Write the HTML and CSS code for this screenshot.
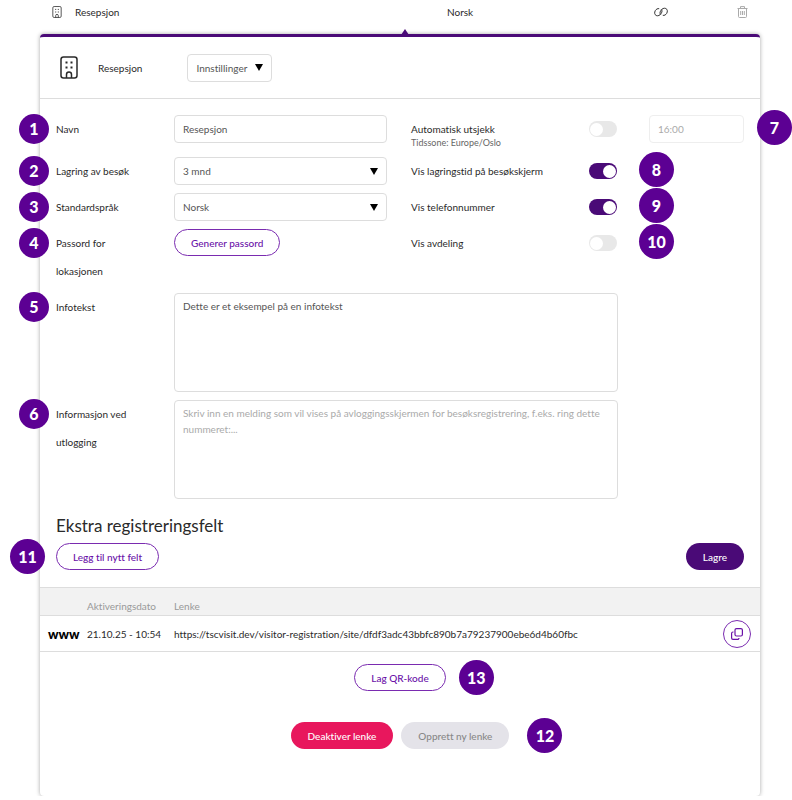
FILE: index.html
```
<!DOCTYPE html>
<html lang="no">

<head>
    <meta charset="UTF-8">
    <meta name="viewport" content="width=device-width, initial-scale=1.0">
    <title>Resepsjon</title>
    <link rel="stylesheet" href="styles.css">
</head>

<body>
    <svg class="sprite" width="0" height="0">
        <symbol id="building" viewBox="0 0 18 23">
            <rect x="1" y="1" width="16" height="21" rx="2.5" fill="none" stroke="currentColor" stroke-width="1.5"/>
            <path d="M6.500 22v-3.500a2.500 2.500 0 0 1 5 0V22" fill="none" stroke="currentColor" stroke-width="1.500"/>
            <path d="M5.500 6.500h2M10.500 6.500h2M5.500 11.500h2M10.500 11.500h2" stroke="currentColor" stroke-width="1.800"/>
        </symbol>
    </svg>

    <div class="location-row">
        <span class="location-name">
            <svg width="10" height="12"><use href="#building"/></svg>
            Resepsjon
        </span>
        <span class="location-lang">Norsk</span>
        <button type="button" class="icon-button" aria-label="Lenke">
            <svg width="14" height="12" viewBox="0 0 14 12" fill="none" stroke="currentColor" stroke-width="1">
                <path d="M5.200 2.700C3.600 2.300 2.200 3.200 1.300 4.600C.2 6.500.5 8.700 2.200 9.500C4 10.300 6 9.300 7.200 7.400C8.300 5.700 8.200 4.200 7.200 3.400"/>
                <path d="M8.800 9.300C10.400 9.700 11.800 8.800 12.700 7.400C13.800 5.500 13.500 3.300 11.800 2.500C10 1.700 8 2.700 6.800 4.600C5.700 6.300 5.800 7.800 6.800 8.600"/>
            </svg>
        </button>
        <button type="button" class="icon-button trash-button" aria-label="Slett">
            <svg width="11" height="12" viewBox="0 0 11 12" fill="none" stroke="currentColor" stroke-width="1">
                <path d="M.5 2.500h10M3.500 2.500V.6h4v1.900M1.500 2.500v8a1 1 0 0 0 1 1h6a1 1 0 0 0 1-1v-8M3.700 5v4M5.500 5v4M7.300 5v4"/>
            </svg>
        </button>
    </div>

    <div class="card">
        <div class="card-header">
            <svg width="18" height="23"><use href="#building"/></svg>
            <span class="card-title">Resepsjon</span>
            <select class="control settings-select" aria-label="Innstillinger">
                <option>Innstillinger</option>
            </select>
        </div>

        <form id="locationForm">
            <div class="form-grid">
                <label class="field-label" for="name"><span class="badge badge-left">1</span>Navn</label>
                <input class="control" type="text" id="name" value="Resepsjon">
                <label class="toggle-label" for="autoCheckout">Automatisk utsjekk
                    <small>Tidssone: Europe/Oslo</small>
                </label>
                <span class="toggle-cell"><input class="toggle" type="checkbox" id="autoCheckout"></span>
                <span class="time-cell">
                    <input class="control" type="text" value="16:00" aria-label="Klokkeslett" disabled>
                    <span class="badge badge-time">7</span>
                </span>

                <label class="field-label" for="storage"><span class="badge badge-left">2</span>Lagring av besøk</label>
                <select class="control" id="storage">
                    <option>3 mnd</option>
                </select>
                <label class="toggle-label" for="showStorage">Vis lagringstid på besøkskjerm</label>
                <span class="toggle-cell">
                    <input class="toggle" type="checkbox" id="showStorage" checked>
                    <span class="badge badge-toggle">8</span>
                </span>

                <label class="field-label" for="language"><span class="badge badge-left">3</span>Standardspråk</label>
                <select class="control" id="language">
                    <option>Norsk</option>
                </select>
                <label class="toggle-label" for="showPhone">Vis telefonnummer</label>
                <span class="toggle-cell">
                    <input class="toggle" type="checkbox" id="showPhone" checked>
                    <span class="badge badge-toggle">9</span>
                </span>

                <label class="field-label" for="password"><span class="badge badge-left">4</span>Passord for lokasjonen</label>
                <button type="button" class="button outline" id="password">Generer passord</button>
                <label class="toggle-label" for="showDepartment">Vis avdeling</label>
                <span class="toggle-cell">
                    <input class="toggle" type="checkbox" id="showDepartment">
                    <span class="badge badge-toggle">10</span>
                </span>

                <label class="field-label" for="info"><span class="badge badge-left">5</span>Infotekst</label>
                <textarea class="control" id="info">Dette er et eksempel på en infotekst</textarea>

                <label class="field-label" for="logout"><span class="badge badge-left">6</span>Informasjon ved utlogging</label>
                <textarea class="control" id="logout" placeholder="Skriv inn en melding som vil vises på avloggingsskjermen for besøksregistrering, f.eks. ring dette nummeret:..."></textarea>
            </div>

            <h2>Ekstra registreringsfelt</h2>
            <div class="form-actions">
                <span class="badge badge-actions">11</span>
                <button type="button" class="button outline">Legg til nytt felt</button>
                <button type="submit" class="button primary">Lagre</button>
            </div>
        </form>

        <table class="links">
            <thead>
                <tr>
                    <th class="col-icon"></th>
                    <th class="col-date">Aktiveringsdato</th>
                    <th>Lenke</th>
                    <th class="col-copy"></th>
                </tr>
            </thead>
            <tbody>
                <tr>
                    <td class="www">www</td>
                    <td>21.10.25 - 10:54</td>
                    <td>https://tscvisit.dev/visitor-registration/site/dfdf3adc43bbfc890b7a79237900ebe6d4b60fbc</td>
                    <td class="col-copy">
                        <button type="button" class="copy-button" aria-label="Kopier lenke">
                            <svg width="12" height="12" viewBox="0 0 12 12" fill="none" stroke="currentColor" stroke-width="1.200">
                                <rect x="4" y=".6" width="7.400" height="7.400" rx="1.500"/>
                                <path d="M2.500 4H2A1.400 1.400 0 0 0 .6 5.400V10A1.400 1.400 0 0 0 2 11.400h4.500A1.400 1.400 0 0 0 8 10"/>
                            </svg>
                        </button>
                    </td>
                </tr>
            </tbody>
        </table>

        <div class="button-row">
            <span class="badge-anchor">
                <button type="button" class="button outline">Lag QR-kode</button>
                <span class="badge badge-qr">13</span>
            </span>
        </div>
        <div class="button-row last">
            <button type="button" class="button danger">Deaktiver lenke</button>
            <span class="badge-anchor">
                <button type="button" class="button" disabled>Opprett ny lenke</button>
                <span class="badge badge-new">12</span>
            </span>
        </div>
    </div>
</body>

</html>
```
FILE: styles.css
```
* {
    box-sizing: border-box;
}

body {
    margin: 0;
    font-family: Lato, sans-serif;
    font-size: 10px;
    font-variant-ligatures: none;
    line-height: 28px;
    color: #2a2a2a;
    background: #fff;
}

button,
input,
select,
textarea {
    font: inherit;
    font-variant-ligatures: none;
    margin: 0;
}

.sprite {
    position: absolute;
}

.location-row {
    display: grid;
    grid-template-columns: 395fr 207fr 83fr 55fr;
    align-items: center;
    height: 34px;
    padding: 0 0 11px 52px;
    line-height: 16px;
}

.location-name {
    display: flex;
    align-items: center;
    gap: 13px;
}

.icon-button {
    display: flex;
    padding: 0;
    border: none;
    background: none;
    color: #333;
}

.trash-button {
    color: #aaa;
}

.card {
    position: relative;
    margin: 0 32px 0 40px;
    border-top: 3px solid #4a0a77;
    border-radius: 4px;
    box-shadow: 0 0 4px rgba(0, 0, 0, 0.35);
}

/* small arrow pointing at the open row */
.card::before {
    content: "";
    position: absolute;
    top: -8px;
    left: 50%;
    margin-left: 1px;
    border: 4px solid transparent;
    border-top: none;
    border-bottom: 6px solid #4a0a77;
}

.card-header {
    display: flex;
    align-items: center;
    height: 62px;
    padding-left: 20px;
    border-bottom: 1px solid #ddd;
}

.card-title {
    margin: 0 45px 0 20px;
}

.control {
    width: 100%;
    height: 28px;
    padding: 0 8px;
    border: 1px solid #ddd;
    border-radius: 4px;
    background: #fff;
    color: #555;
    line-height: 16px;
}

select.control {
    appearance: none;
    background: url("data:image/svg+xml,%3Csvg xmlns='http://www.w3.org/2000/svg' width='8' height='7'%3E%3Cpath d='M0 0h8L4 7z'/%3E%3C/svg%3E") no-repeat right 8px center;
}

.settings-select {
    width: 85px;
}

textarea.control {
    grid-column: 2 / 5;
    width: auto;
    height: 99px;
    margin-right: 31px;
    padding-top: 4px;
    resize: none;
}

.control::placeholder,
.control:disabled {
    color: #aaa;
}

.control:disabled {
    border-color: #eee;
}

form {
    padding: 16px 16px 17px;
}

.form-grid {
    display: grid;
    grid-template-columns: 118px 213fr 202fr 60px 95px;
    row-gap: 8px;
    align-items: start;
}

.field-label {
    grid-column: 1;
    position: relative;
    padding-right: 40px;
}

.toggle-label {
    padding-left: 24px;
}

.toggle-label small {
    display: block;
    margin-top: -6px;
    font-size: 9px;
    line-height: 12px;
    color: #666;
}

.toggle-cell,
.time-cell {
    position: relative;
    display: flex;
    align-items: center;
    height: 28px;
}

.toggle {
    appearance: none;
    display: flex;
    align-items: center;
    width: 28px;
    height: 16px;
    padding: 0 1px;
    border-radius: 8px;
    background: #e8e8e8;
}

.toggle::before {
    content: "";
    width: 13px;
    height: 13px;
    border-radius: 50%;
    background: #fff;
}

.toggle:checked {
    justify-content: flex-end;
    background: #4a0a77;
}

.badge {
    position: absolute;
    width: 35px;
    border-radius: 50%;
    background: #5c0093;
    color: #fff;
    font-size: 16px;
    font-weight: 900;
    line-height: 35px;
    text-align: center;
}

.badge-left {
    left: -37px;
    top: -1px;
    width: 30px;
    line-height: 30px;
}

.badge-time {
    left: 108px;
    top: -5px;
}

.badge-toggle {
    left: 50px;
    top: -5px;
}

.badge-actions {
    left: -46px;
}

.badge-anchor {
    position: relative;
    display: flex;
    align-items: center;
}

.badge-qr {
    left: calc(100% + 13px);
}

.badge-new {
    left: calc(100% + 18px);
}

.button {
    height: 27px;
    padding: 0 16px;
    border: 1px solid transparent;
    border-radius: 14px;
    font-weight: 500;
    line-height: 16px;
    justify-self: start;
    white-space: nowrap;
}

.outline {
    border-color: #7a2bb0;
    background: #fff;
    color: #6a11a8;
}

.primary {
    background: #4a0a77;
    color: #fff;
}

.danger {
    background: #e8175d;
    color: #fff;
}

.button:disabled {
    background: #e4e3e9;
    color: #888;
}

h2 {
    margin: 16px 0 6px;
    font-size: 17px;
    font-weight: normal;
    line-height: 22px;
}

.form-actions {
    position: relative;
    display: flex;
    justify-content: space-between;
    align-items: center;
}

.links {
    width: 100%;
    border-collapse: collapse;
    table-layout: fixed;
    line-height: 18px;
}

.links th,
.links td {
    padding: 0;
    border: solid #ddd;
    border-width: 1px 0;
    text-align: left;
}

.links th {
    height: 28px;
    padding-top: 8px;
    background: #f2f2f2;
    color: #999;
    font-weight: normal;
}

.links td {
    height: 36px;
}

.col-icon {
    width: 47px;
}

.col-date {
    width: 87px;
}

.col-copy {
    width: 37px;
}

.links .www {
    padding-left: 8px;
    color: #000;
    font-size: 13px;
    font-weight: 900;
}

.copy-button {
    display: flex;
    align-items: center;
    justify-content: center;
    width: 28px;
    height: 28px;
    padding: 0;
    border: 1px solid #7a2bb0;
    border-radius: 50%;
    background: #fff;
    color: #6a11a8;
}

.button-row {
    display: flex;
    justify-content: center;
    gap: 8px;
    padding-top: 12px;
}

.last {
    padding: 31px 0 47px;
}
```
